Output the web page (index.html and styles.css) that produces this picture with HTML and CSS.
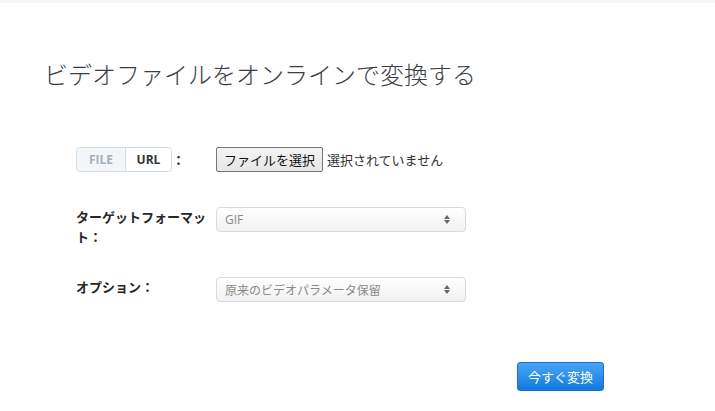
FILE: index.html
```html
<!DOCTYPE html>
<html lang="ja">
<head>
<meta charset="utf-8">
<link rel="stylesheet" href="styles.css">
</head>
<body>
<div class="topline"></div>
<main class="page">
  <h1 class="title">ビデオファイルをオンラインで変換する</h1>
  <form class="form">
    <div class="row">
      <div class="label label-toggle">
        <div class="toggle">
          <span class="seg seg-off">FILE</span>
          <span class="seg seg-on">URL</span>
        </div>
        <span class="colon">：</span>
      </div>
      <div class="field">
        <span class="filebtn">ファイルを選択</span>
        <span class="nofile">選択されていません</span>
      </div>
    </div>
    <div class="row">
      <div class="label">ターゲットフォーマット：</div>
      <div class="field">
        <div class="select"><span>GIF</span><span class="arrows"><i class="up"></i><i class="down"></i></span></div>
      </div>
    </div>
    <div class="row">
      <div class="label">オプション：</div>
      <div class="field">
        <div class="select"><span>原来のビデオパラメータ保留</span><span class="arrows"><i class="up"></i><i class="down"></i></span></div>
      </div>
    </div>
    <div class="actions">
      <span class="submit">今すぐ変換</span>
    </div>
  </form>
</main>
</body>
</html>
```
FILE: styles.css
```css
html, body {
  margin: 0;
  padding: 0;
  background: #ffffff;
}
body {
  font-family: "Noto Sans CJK JP", "Open Sans", sans-serif;
  color: #333333;
  width: 715px;
  height: 411px;
  overflow: hidden;
}
.topline {
  height: 3px;
  background: #f6f6f6;
}
.page {
  padding-left: 44px;
}
.title {
  margin: 0;
  padding-top: 54px;
  font-size: 24px;
  line-height: 34px;
  font-weight: 300;
  color: #3a3e44;
}
.form {
  margin-top: 56px;
  margin-left: 32px;
  display: flex;
  flex-direction: column;
  gap: 30px;
}
.row {
  display: flex;
  align-items: flex-start;
  min-height: 30px;
}
.label {
  width: 140px;
  font-size: 13px;
  line-height: 20px;
  font-weight: 700;
  color: #262626;
}
.label-toggle {
  display: flex;
  align-items: center;
}
.toggle {
  display: flex;
  height: 23px;
  border: 1px solid #cfdbe7;
  border-radius: 4px;
  overflow: hidden;
  font-family: "Open Sans", sans-serif;
  font-weight: 700;
  font-size: 12px;
}
.seg {
  display: flex;
  align-items: center;
  justify-content: center;
}
.seg-off {
  width: 48px;
  background: #f3f6f9;
  color: #a6afb8;
  border-right: 1px solid #cfdbe7;
}
.seg-on {
  width: 45px;
  background: #fff;
  color: #333;
}
.colon {
  font-size: 13px;
}
.field {
  display: flex;
  align-items: center;
}
.filebtn {
  box-sizing: border-box;
  height: 25px;
  width: 107px;
  display: flex;
  align-items: center;
  justify-content: center;
  border: 1px solid #767676;
  border-radius: 2px;
  background: linear-gradient(#f3f3f3, #e6e6e6);
  color: #111;
  font-size: 13px;
}
.nofile {
  margin-left: 4px;
  font-size: 13px;
  color: #333;
}
.select {
  box-sizing: border-box;
  width: 250px;
  height: 25px;
  border: 1px solid #d3dce6;
  border-radius: 4px;
  background: linear-gradient(#ffffff, #f1f1f1);
  display: flex;
  align-items: center;
  justify-content: space-between;
  padding: 0 15px 0 8px;
  font-size: 12px;
  color: #8a8a8a;
  font-family: "Open Sans", "Noto Sans CJK JP", sans-serif;
}
.arrows {
  display: flex;
  flex-direction: column;
  gap: 1px;
}
.arrows i {
  width: 0;
  height: 0;
  border-left: 3px solid transparent;
  border-right: 3px solid transparent;
}
.arrows .up {
  border-bottom: 4px solid #666;
}
.arrows .down {
  border-top: 4px solid #666;
}
.actions {
  margin-top: 25px;
  padding-left: 441px;
}
.submit {
  box-sizing: border-box;
  display: flex;
  align-items: center;
  justify-content: center;
  width: 87px;
  height: 29px;
  border: 1px solid #1a70c6;
  border-radius: 3px;
  background: linear-gradient(#46a6f5, #1479de);
  color: #fff;
  font-size: 13px;
}
```
